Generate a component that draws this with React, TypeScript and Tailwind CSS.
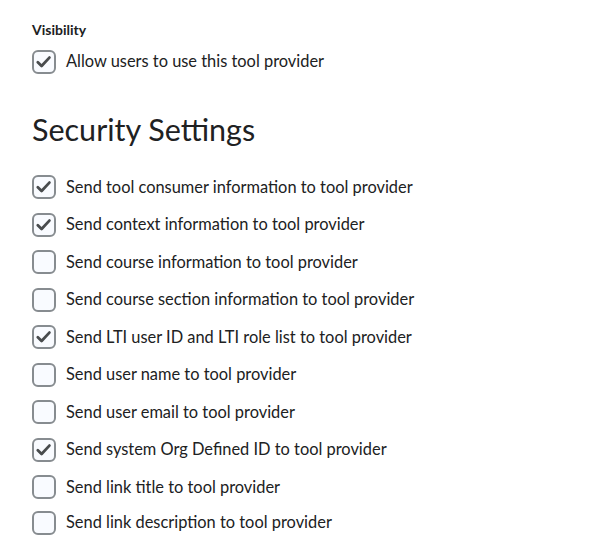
import React from "react";

const settings = [
  { label: "Send tool consumer information to tool provider", checked: true },
  { label: "Send context information to tool provider", checked: true },
  { label: "Send course information to tool provider", checked: false },
  { label: "Send course section information to tool provider", checked: false },
  { label: "Send LTI user ID and LTI role list to tool provider", checked: true },
  { label: "Send user name to tool provider", checked: false },
  { label: "Send user email to tool provider", checked: false },
  { label: "Send system Org Defined ID to tool provider", checked: true },
  { label: "Send link title to tool provider", checked: false },
  { label: "Send link description to tool provider", checked: false },
];

function Checkbox({ checked }: { checked: boolean }) {
  return (
    <span className="flex h-6 w-6 shrink-0 items-center justify-center rounded-[6px] border-2 border-[#878c90] bg-[#f9fbff]">
      {checked && (
        <svg width="20" height="20" viewBox="0 0 20 20" fill="none">
          <path
            d="M3.8 10.2 L7.6 14 L15.4 5.6"
            stroke="#494c4e"
            strokeWidth="2.8"
            strokeLinecap="round"
            strokeLinejoin="round"
          />
        </svg>
      )}
    </span>
  );
}

function Row({ label, checked, className = "" }: { label: string; checked: boolean; className?: string }) {
  return (
    <label className={`flex h-[37.5px] items-center gap-[10px] ${className}`}>
      <Checkbox checked={checked} />
      <span className="text-[16.4px] text-[#202122]">{label}</span>
    </label>
  );
}

export default function App() {
  return (
    <div className="min-h-[552px] bg-white px-8 pt-[20px] font-['Lato','Noto_Sans',sans-serif] text-[#202122]">
      <h3 className="text-sm font-bold leading-5">Visibility</h3>
      <div className="mt-[3px]">
        <Row label="Allow users to use this tool provider" checked />
      </div>

      <h2 className="mt-[30px] text-[30.5px] leading-9 font-normal">Security Settings</h2>

      <div className="mt-[22px] flex flex-col">
        {settings.map((s, i) => (
          <Row
            key={s.label}
            label={s.label}
            checked={s.checked}
            className={i === settings.length - 1 ? "-mt-[2px]" : ""}
          />
        ))}
      </div>
    </div>
  );
}
